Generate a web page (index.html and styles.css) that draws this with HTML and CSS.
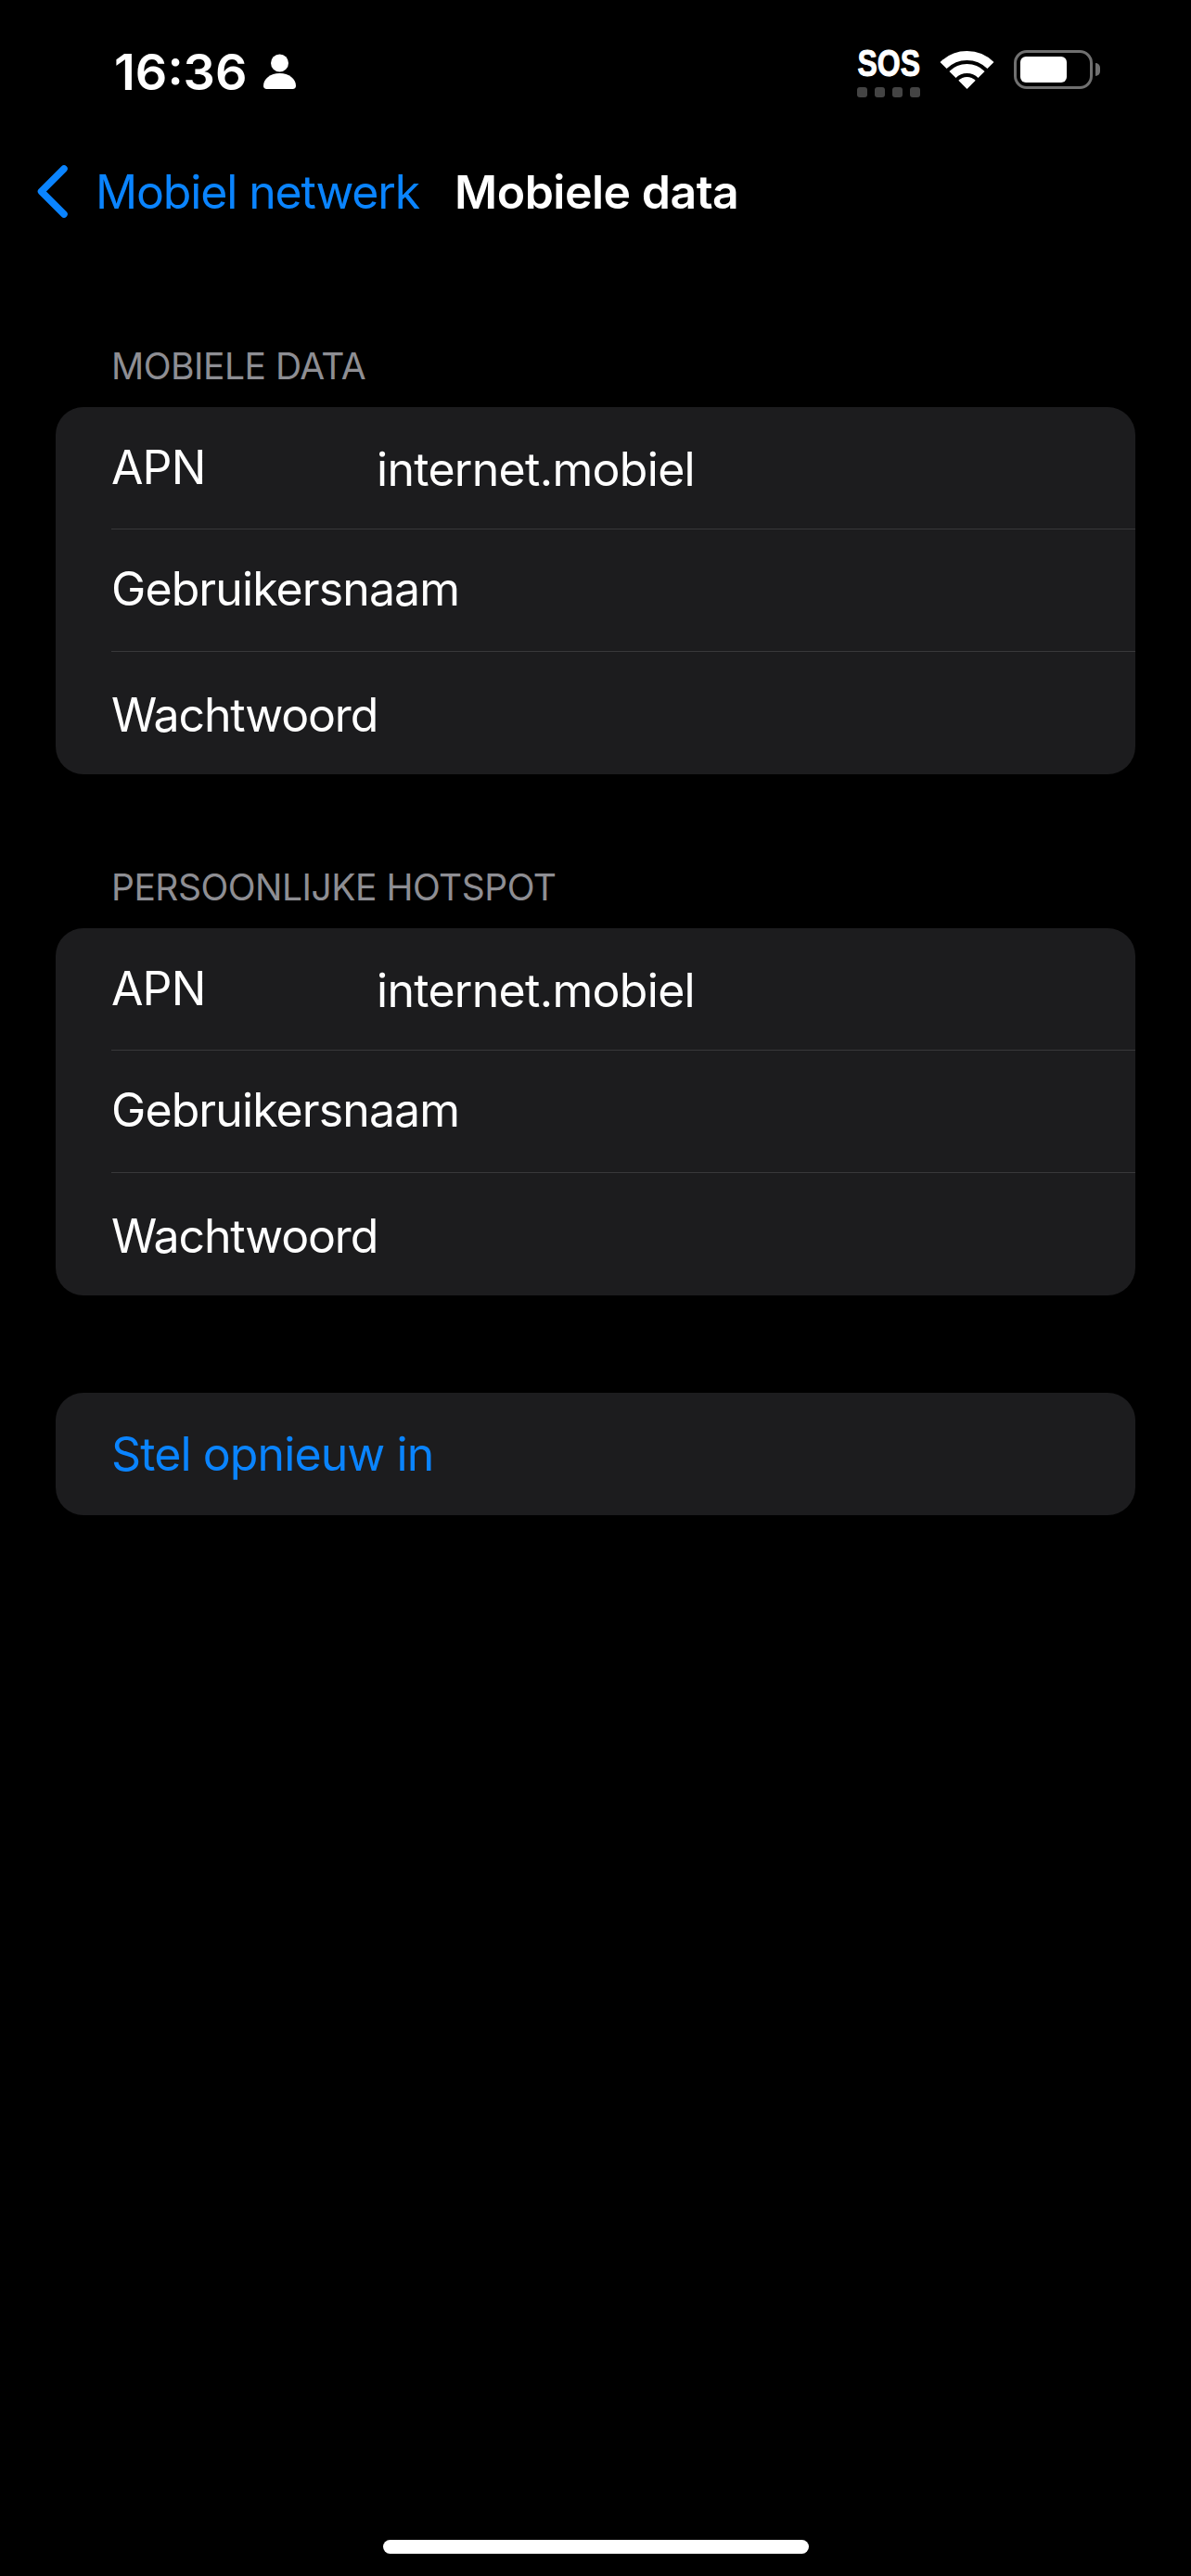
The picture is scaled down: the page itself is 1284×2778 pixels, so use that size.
FILE: index.html
```html
<!DOCTYPE html>
<html lang="nl">
<head>
  <meta charset="UTF-8">
  <meta name="viewport" content="width=device-width, initial-scale=1.0">
  <title>Mobiele data</title>
  <link rel="stylesheet" href="styles.css">
</head>
<body>
  <div class="status-bar">
    <div class="status-left">
      <span class="clock">16:36</span>
      <svg class="person-icon" viewBox="0 0 35 38">
        <circle cx="17.5" cy="10" r="9.5" fill="#fff"/>
        <path d="M0 34.5C0 27 7.5 21 17.5 21S35 27 35 34.5C35 36.8 33.8 38 31.5 38H3.5C1.2 38 0 36.8 0 34.5Z" fill="#fff"/>
      </svg>
    </div>
    <div class="status-right">
      <div class="sos">
        <span class="sos-text">SOS</span>
        <div class="sos-dots"><i></i><i></i><i></i><i></i></div>
      </div>
      <svg class="wifi-icon" viewBox="0 0 59 42">
        <path d="M4.04 16.54A36 36 0 0 1 54.96 16.54" fill="none" stroke="#fff" stroke-width="10"/>
        <path d="M13.94 26.44A22 22 0 0 1 45.06 26.44" fill="none" stroke="#fff" stroke-width="10"/>
        <path d="M29.5 42L20.31 32.81A13 13 0 0 1 38.69 32.81Z" fill="#fff"/>
      </svg>
      <div class="battery">
        <div class="battery-body"><div class="battery-fill"></div></div>
        <div class="battery-cap"></div>
      </div>
    </div>
  </div>

  <div class="nav-bar">
    <svg class="back-icon" viewBox="0 0 33 57">
      <path d="M29 4L4.5 28.5L29 53" fill="none" stroke="#0a84ff" stroke-width="7.5" stroke-linecap="round" stroke-linejoin="round"/>
    </svg>
    <span class="back-label">Mobiel netwerk</span>
    <span class="nav-title">Mobiele data</span>
  </div>

  <div class="section-title first">MOBIELE DATA</div>
  <div class="card">
    <div class="row row-apn"><span class="row-label">APN</span><span class="row-value">internet.mobiel</span></div>
    <div class="row row-user"><span class="row-label">Gebruikersnaam</span></div>
    <div class="row row-last"><span class="row-label">Wachtwoord</span></div>
  </div>

  <div class="section-title">PERSOONLIJKE HOTSPOT</div>
  <div class="card">
    <div class="row row-apn"><span class="row-label">APN</span><span class="row-value">internet.mobiel</span></div>
    <div class="row row-user"><span class="row-label">Gebruikersnaam</span></div>
    <div class="row row-last"><span class="row-label">Wachtwoord</span></div>
  </div>

  <div class="card reset-card">
    <div class="row row-reset"><span class="reset-label">Stel opnieuw in</span></div>
  </div>

  <div class="home-indicator"></div>
</body>
</html>
```

FILE: styles.css
```css
* {
  box-sizing: border-box;
}
body {
  margin: 0;
  width: 1284px;
  height: 2778px;
  overflow: hidden;
  background-color: #000;
  color: #fff;
  font-family: Inter, "Noto Sans", sans-serif;
  display: flex;
  flex-direction: column;
}

/* status bar */
.status-bar {
  height: 152px;
  padding: 46px 98px 0 123px;
  display: flex;
  justify-content: space-between;
  align-items: flex-start;
}
.status-left {
  display: flex;
  align-items: flex-start;
}
.clock {
  font-size: 54px;
  font-weight: 600;
  line-height: 64px;
  letter-spacing: 0;
}
.person-icon {
  width: 35px;
  height: 38px;
  margin: 12px 0 0 17px;
}
.status-right {
  display: flex;
  align-items: flex-start;
  padding-top: 7px;
}
.sos {
  width: 70px;
  display: flex;
  flex-direction: column;
  align-items: center;
}
.sos-text {
  font-family: "Liberation Sans", sans-serif;
  font-weight: 700;
  font-size: 40px;
  line-height: 30px;
  -webkit-text-stroke: 1px #fff;
  transform: scaleX(0.8);
}
.sos-dots {
  display: flex;
  gap: 8px;
  margin-top: 11px;
}
.sos-dots i {
  width: 11px;
  height: 11px;
  border-radius: 3px;
  background-color: #444;
}
.wifi-icon {
  width: 59px;
  height: 42px;
  margin: 1px 0 0 20px;
}
.battery {
  display: flex;
  align-items: center;
  margin: 1px 0 0 21px;
}
.battery-body {
  width: 85px;
  height: 42px;
  padding: 4px 25px 4px 4px;
  border: 3px solid #707070;
  border-radius: 14px;
}
.battery-fill {
  height: 100%;
  background-color: #fff;
  border-radius: 6px;
}
.battery-cap {
  width: 5px;
  height: 14px;
  margin-left: 3px;
  background-color: #707070;
  border-radius: 0 5px 5px 0;
}

/* navigation */
.nav-bar {
  height: 100px;
  padding: 9px 0 0 40px;
  display: flex;
  align-items: center;
}
.back-icon {
  width: 33px;
  height: 57px;
}
.back-label {
  margin-left: 30px;
  color: #0a84ff;
  font-size: 50px;
  letter-spacing: -1.15px;
}
.nav-title {
  margin-left: 38px;
  font-size: 50px;
  font-weight: 600;
  letter-spacing: -0.5px;
}

/* grouped list */
.section-title {
  margin-top: 99px;
  padding-left: 120px;
  height: 67px;
  color: #8e8e93;
  font-size: 39px;
  line-height: 45px;
  letter-spacing: -0.5px;
}
.section-title.first {
  margin-top: 120px;
}
.card {
  margin: 0 60px;
  background-color: #1c1c1e;
  border-radius: 30px;
  padding-left: 60px;
}
.row {
  height: 132px;
  display: flex;
  align-items: center;
  border-bottom: 1px solid #38383a;
  font-size: 50px;
  letter-spacing: -0.9px;
}
.row-apn {
  padding-bottom: 2px;
}
.row-user {
  padding-bottom: 4px;
}
.row-last {
  padding-top: 3px;
  letter-spacing: -1.15px;
}
.row-last, .row-reset {
  border-bottom: none;
}
.row-label {
  flex: none;
}
.row-apn .row-label {
  width: 286px;
}
.row-value {
  padding-top: 4px;
  letter-spacing: -0.7px;
}
.reset-card {
  margin-top: 105px;
}
.reset-label {
  color: #0a84ff;
}
.home-indicator {
  width: 459px;
  height: 15px;
  margin: auto auto 24px;
  background-color: #fff;
  border-radius: 8px;
}
```
